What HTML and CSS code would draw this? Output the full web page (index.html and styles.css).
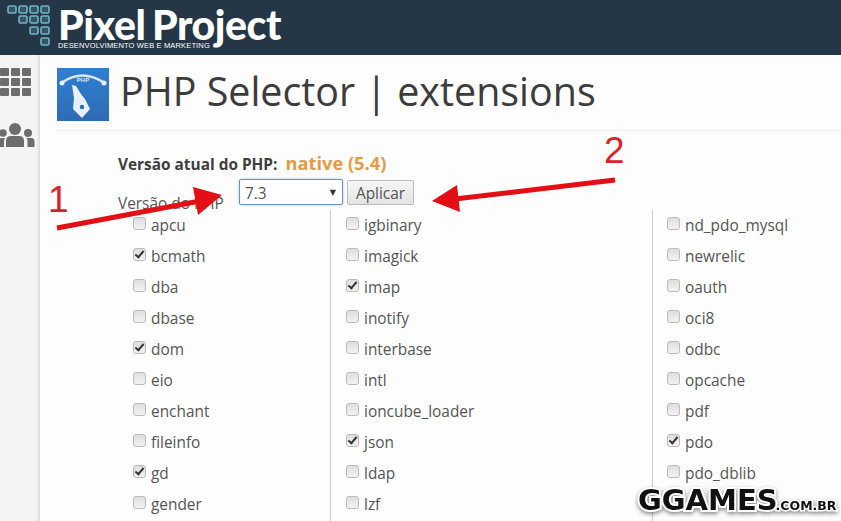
FILE: index.html
```html
<!DOCTYPE html>
<html lang="pt-BR">
<head>
  <meta charset="UTF-8">
  <title>PHP Selector | extensions</title>
  <link rel="stylesheet" href="styles.css">
</head>
<body>
  <header class="topbar">
    <svg class="logo-mark" width="56" height="50" viewBox="0 0 56 50">
      <g fill="#6fa9bb" fill-opacity="0.25" stroke="#6fb4c8" stroke-width="1.6">
        <rect x="8" y="7" width="8" height="7" rx="1.5"/>
        <rect x="19" y="7" width="8" height="7" rx="1.5"/>
        <rect x="30" y="7" width="8" height="7" rx="1.5"/>
        <rect x="41" y="7" width="8" height="7" rx="1.5"/>
        <rect x="19" y="17" width="8" height="7" rx="1.5"/>
        <rect x="30" y="17" width="8" height="7" rx="1.5"/>
        <rect x="41" y="17" width="8" height="7" rx="1.5"/>
        <rect x="30" y="28" width="8" height="7" rx="1.5"/>
        <rect x="41" y="28" width="8" height="7" rx="1.5"/>
        <rect x="41" y="39" width="8" height="7" rx="1.5"/>
      </g>
    </svg>
    <div class="logo-text">
      <div class="logo-name">Pixel Project</div>
      <div class="logo-sub">DESENVOLVIMENTO WEB E MARKETING</div>
    </div>
  </header>

  <div class="layout">
    <nav class="sidebar">
      <svg width="32" height="28" viewBox="0 0 32 28">
        <g fill="#6d6d6d">
          <rect x="0" y="0" width="9" height="8" rx="1"/>
          <rect x="11" y="0" width="9" height="8" rx="1"/>
          <rect x="22" y="0" width="9" height="8" rx="1"/>
          <rect x="0" y="10" width="9" height="8" rx="1"/>
          <rect x="11" y="10" width="9" height="8" rx="1"/>
          <rect x="22" y="10" width="9" height="8" rx="1"/>
          <rect x="0" y="20" width="9" height="8" rx="1"/>
          <rect x="11" y="20" width="9" height="8" rx="1"/>
          <rect x="22" y="20" width="9" height="8" rx="1"/>
        </g>
      </svg>
      <svg class="users-icon" width="36" height="24" viewBox="0 0 36 24">
        <g fill="#6d6d6d">
          <circle cx="15" cy="6" r="6"/>
          <path d="M6 24 v-6 q0 -5 5 -5 h8 q5 0 5 5 v6 z"/>
          <circle cx="3" cy="10" r="3.800"/>
          <path d="M-2 24 v-5 q0 -4 3 -4 h4 q-1 1 -1 4 v5 z"/>
          <circle cx="28" cy="10" r="4"/>
          <path d="M34.500 24 v-5 q0 -4 -3 -4 h-5 q1 1 1 4 v5 z"/>
        </g>
      </svg>
    </nav>

    <main class="content">
      <div class="title-row">
        <svg class="php-icon" width="52" height="53" viewBox="0 0 52 53">
          <defs>
            <linearGradient id="phpBlue" x1="0" y1="0" x2="0" y2="1">
              <stop offset="0" stop-color="#2f7fd0"/>
              <stop offset="1" stop-color="#2e6cb4"/>
            </linearGradient>
          </defs>
          <rect width="52" height="53" fill="url(#phpBlue)"/>
          <path d="M6 14 Q25 1 46 14" fill="none" stroke="#dce8f4" stroke-width="2.500"/>
          <circle cx="5" cy="15" r="2.500" fill="#e8f0f8"/>
          <circle cx="47" cy="15" r="2.500" fill="#e8f0f8"/>
          <path d="M15 17 L19 18 L24 26 L28 31 L33 41 L25 50 L16 41 L17 30 Z" fill="#e8f0f8"/>
          <circle cx="25" cy="39" r="2.200" fill="#2e6cb4"/>
          <text class="php-icon-text" x="26" y="14">PHP</text>
        </svg>
        <h1>PHP Selector | extensions</h1>
      </div>

      <form class="selector-form">
        <div class="current">
          <span class="current-label">Versão atual do PHP:</span>
          <span class="current-value">native (5.4)</span>
        </div>
        <div class="version-row">
          <label class="version-label">Versão do PHP</label>
          <div class="fake-select">7.3<span class="caret">▼</span></div>
          <button type="button" class="apply">Aplicar</button>
        </div>

        <div class="columns">
          <div class="col col-first">
            <label class="ext"><span class="box"></span>apcu</label>
            <label class="ext"><span class="box on"></span>bcmath</label>
            <label class="ext"><span class="box"></span>dba</label>
            <label class="ext"><span class="box"></span>dbase</label>
            <label class="ext"><span class="box on"></span>dom</label>
            <label class="ext"><span class="box"></span>eio</label>
            <label class="ext"><span class="box"></span>enchant</label>
            <label class="ext"><span class="box"></span>fileinfo</label>
            <label class="ext"><span class="box on"></span>gd</label>
            <label class="ext"><span class="box"></span>gender</label>
          </div>
          <div class="col col-second">
            <label class="ext"><span class="box"></span>igbinary</label>
            <label class="ext"><span class="box"></span>imagick</label>
            <label class="ext"><span class="box on"></span>imap</label>
            <label class="ext"><span class="box"></span>inotify</label>
            <label class="ext"><span class="box"></span>interbase</label>
            <label class="ext"><span class="box"></span>intl</label>
            <label class="ext"><span class="box"></span>ioncube_loader</label>
            <label class="ext"><span class="box on"></span>json</label>
            <label class="ext"><span class="box"></span>ldap</label>
            <label class="ext"><span class="box"></span>lzf</label>
          </div>
          <div class="col col-third">
            <label class="ext"><span class="box"></span>nd_pdo_mysql</label>
            <label class="ext"><span class="box"></span>newrelic</label>
            <label class="ext"><span class="box"></span>oauth</label>
            <label class="ext"><span class="box"></span>oci8</label>
            <label class="ext"><span class="box"></span>odbc</label>
            <label class="ext"><span class="box"></span>opcache</label>
            <label class="ext"><span class="box"></span>pdf</label>
            <label class="ext"><span class="box on"></span>pdo</label>
            <label class="ext"><span class="box"></span>pdo_dblib</label>
          </div>
        </div>
      </form>
    </main>
  </div>

  <!-- anotacoes em cima do print -->
  <div class="note note-one">1</div>
  <div class="note note-two">2</div>
  <svg class="arrows" width="841" height="521" viewBox="0 0 841 521">
    <path d="M57 228 L200 201" stroke="#e30f14" stroke-width="5" fill="none"/>
    <path d="M193 187 L222 195 L198 215 Z" fill="#e30f14"/>
    <path d="M615 180 L455 199" stroke="#e30f14" stroke-width="5" fill="none"/>
    <path d="M432 201 L457 185 L460 212 Z" fill="#e30f14"/>
  </svg>

  <div class="watermark"><span class="wm-big">GGAMES</span><span class="wm-small">.COM.BR</span></div>
</body>
</html>
```

FILE: styles.css
```css
html, body {
  margin: 0;
  padding: 0;
}

body {
  width: 841px;
  height: 521px;
  overflow: hidden;
  position: relative;
  background: #fdfdfd;
  font-family: "Open Sans", sans-serif;
  color: #555;
}

.topbar {
  height: 55px;
  background: #253747;
  display: flex;
  align-items: flex-start;
}

.logo-mark {
  flex: none;
  margin-top: -1px;
}

.logo-text {
  margin-left: 2px;
  color: #fff;
}

.logo-name {
  font-family: "Lato", sans-serif;
  font-weight: 900;
  font-size: 41px;
  line-height: 49px;
  letter-spacing: -0.4px;
  word-spacing: -3px;
  white-space: nowrap;
}

.logo-sub {
  font-family: "Liberation Sans", sans-serif;
  font-size: 7.5px;
  line-height: 8px;
  margin-top: -7px;
  letter-spacing: 0.15px;
  white-space: nowrap;
}

.layout {
  display: flex;
  height: 466px;
}

.sidebar {
  width: 39px;
  flex: none;
  background: #f4f4f4;
  border-right: 1px solid #ddd;
  box-shadow: inset -3px 0 3px -2px #e2e2e2;
  overflow: hidden;
  padding-top: 13px;
}

.sidebar svg {
  display: block;
}

.sidebar .users-icon {
  margin-top: 27px;
}

.content {
  flex: 1;
  min-width: 0;
}

.title-row {
  display: flex;
  align-items: flex-start;
  height: 76px;
  margin-left: 17px;
  padding-top: 13px;
  box-sizing: border-box;
  border-bottom: 1px solid #eee;
}

.php-icon {
  flex: none;
}

.php-icon-text {
  font-family: "Liberation Sans", sans-serif;
  font-size: 6px;
  font-weight: 700;
  fill: #dfe9f4;
  text-anchor: middle;
}

h1 {
  margin: -2px 0 0 11px;
  font-size: 39.400px;
  line-height: 50px;
  font-weight: 400;
  color: #3c3c3c;
}

.selector-form {
  padding-top: 22px;
}

.current {
  margin-left: 78px;
  height: 22px;
  display: flex;
  align-items: center;
}

.current-label {
  font-size: 15.400px;
  font-weight: 700;
  color: #3e3e3e;
}

.current-value {
  margin-left: 8px;
  margin-top: -4px;
  font-size: 18.300px;
  font-weight: 700;
  color: #e79a45;
}

.version-row {
  display: flex;
  align-items: flex-start;
  margin-left: 78px;
  margin-top: 5px;
  height: 37px;
}

.version-label {
  width: 121px;
  flex: none;
  padding-top: 14px;
  font-size: 15.400px;
  line-height: 20px;
  white-space: nowrap;
}

.fake-select {
  width: 104px;
  height: 26px;
  margin-top: -1px;
  box-sizing: border-box;
  border: 1px solid #6f93b4;
  border-radius: 2px;
  box-shadow: 0 0 3px #a9c6dd;
  background: #fff;
  padding: 4px 0 0 5px;
  font-size: 15.400px;
  line-height: 20px;
  position: relative;
}

.caret {
  position: absolute;
  right: 6px;
  top: 0;
  font-family: "DejaVu Sans", sans-serif;
  font-size: 8px;
  line-height: 26px;
  color: #333;
}

.apply {
  width: 67px;
  height: 25px;
  margin-left: 4px;
  padding: 3px 0 0;
  border: 1px solid #bbb;
  border-radius: 2px;
  background: linear-gradient(#f6f6f6, #e4e4e4);
  font-family: "Open Sans", sans-serif;
  font-size: 15.400px;
  line-height: 20px;
  color: #555;
}

.columns {
  display: flex;
  margin-top: -7px;
}

.col {
  flex: none;
  height: 320px;
  box-sizing: border-box;
}

.col-first {
  width: 291px;
  padding-left: 93px;
  border-right: 1px solid #ccc;
}

.col-second {
  width: 322px;
  padding-left: 15px;
  border-right: 1px solid #ccc;
}

.col-third {
  padding-left: 14px;
}

.ext {
  display: flex;
  align-items: center;
  height: 31px;
  font-size: 15.400px;
  color: #555;
}

.box {
  width: 13px;
  height: 13px;
  flex: none;
  margin-top: -4px;
  margin-right: 5px;
  border: 1px solid #bbb;
  border-radius: 3px;
  box-sizing: border-box;
  background: linear-gradient(#dedede, #f2f2f2);
  position: relative;
}

.box.on::after {
  content: "";
  position: absolute;
  left: 3px;
  top: 0;
  width: 3px;
  height: 7px;
  border: solid #333;
  border-width: 0 2px 2px 0;
  transform: rotate(40deg);
}

.note {
  position: absolute;
  font-family: "Liberation Sans", sans-serif;
  font-size: 37px;
  line-height: 40px;
  color: #d8232a;
}

.note-one {
  left: 48px;
  top: 180px;
}

.note-two {
  left: 604px;
  top: 131px;
}

.arrows {
  position: absolute;
  left: 0;
  top: 0;
}

.watermark {
  position: absolute;
  left: 638px;
  top: 481px;
  display: flex;
  align-items: baseline;
  font-family: "DejaVu Sans", sans-serif;
  font-weight: 700;
  color: #111;
  paint-order: stroke fill;
  -webkit-text-stroke: 4px #fff;
  filter: drop-shadow(0 2px 2px rgba(0, 0, 0, 0.45));
}

.wm-big {
  font-size: 29px;
  line-height: 38px;
}

.wm-small {
  margin-left: -2px;
  font-size: 12.500px;
  -webkit-text-stroke: 3px #fff;
}
```
